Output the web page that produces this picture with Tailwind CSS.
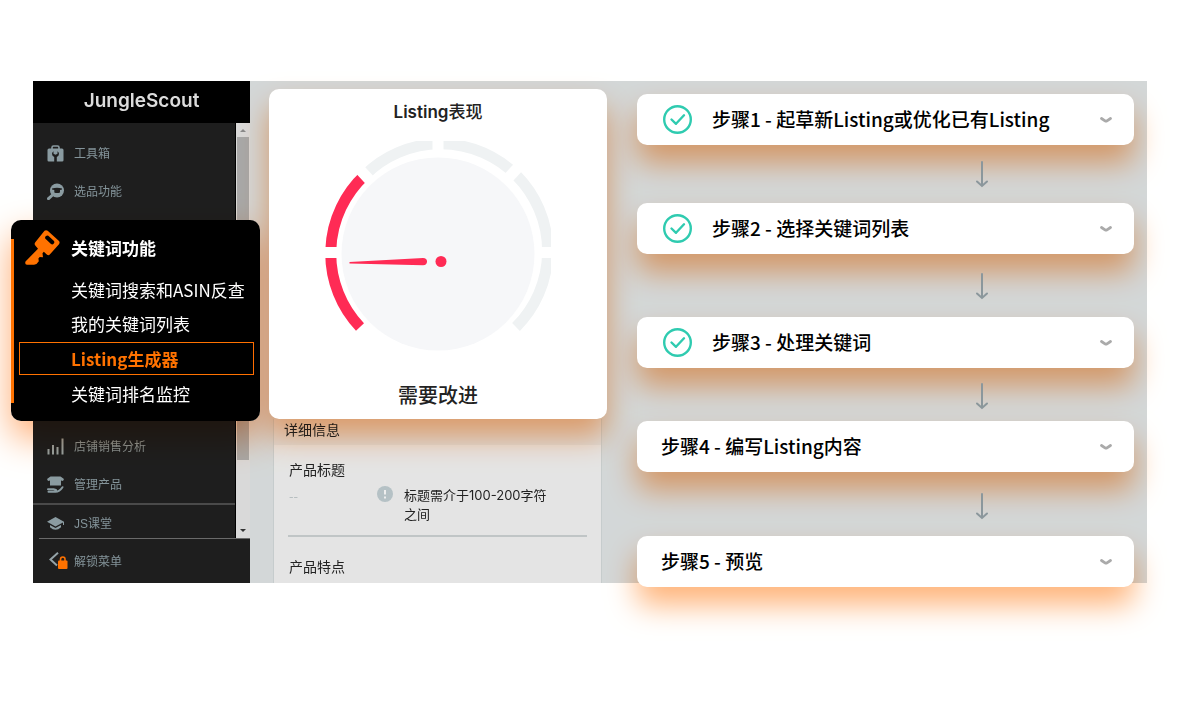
<!DOCTYPE html>
<html lang="zh-CN">
<head>
<meta charset="utf-8">
<meta name="viewport" content="width=device-width, initial-scale=1">
<title>JungleScout</title>
<script src="https://cdn.jsdelivr.net/npm/@tailwindcss/browser@4"></script>
</head>
<body class="min-h-screen bg-white px-[33px] pt-[81px] pb-12 font-['Noto_Sans_CJK_SC',sans-serif]">
<div class="flex bg-[#d3d7d8]">

  <!-- Sidebar -->
  <aside class="flex w-[217px] shrink-0 flex-col bg-[#1e1e1e] text-xs text-[#84949a]">
    <div class="flex h-[42px] items-center justify-center bg-black pb-[2px] font-['Inter','Noto_Sans_CJK_SC',sans-serif] text-[19px] font-semibold text-[#dcdcdc]">JungleScout</div>
    <nav class="flex" aria-label="主菜单">
      <ul class="flex-1 border-r border-black pt-[11px]">
        <li><a href="#" class="flex h-[38px] items-center gap-[10px] pl-[14px]">
          <svg class="size-[17px]" viewBox="0 0 17 17" aria-hidden="true"><path d="M5 4V2.500Q5 1 6.500 1h4Q12 1 12 2.500V4" fill="none" stroke="#8a9ba1" stroke-width="1.600"/><path fill="#8a9ba1" d="M2 3.500h13Q16.500 3.500 16.500 5v10.200q0 1.300-1.300 1.300H9.800V12Q12 11 12 8.800 12 7.300 10.500 6.300v2.500l-2 1-2-1V6.300Q5 7.300 5 8.800 5 11 7.200 12v4.500H1.800Q.5 16.500.5 15.200V5Q.5 3.500 2 3.500Z"/></svg>
          <span>工具箱</span></a></li>
        <li><a href="#" class="flex h-[38px] items-center gap-[10px] pl-[14px]">
          <svg class="size-[17px]" viewBox="0 0 17 17" aria-hidden="true"><circle cx="10" cy="7.500" r="7" fill="#8a9ba1"/><path d="M5.500 12 1.500 15.700" stroke="#8a9ba1" stroke-width="3" stroke-linecap="round"/><path fill="#1e1e1e" d="M5 5.500Q10 4 15 5.500V6.500L13 7v2.500Q10 10.500 7.300 9.500V7L5 6.500Z"/></svg>
          <span>选品功能</span></a></li>
        <li class="relative h-[217px]">
          <!-- Expanded keyword group -->
          <div class="absolute top-[10px] -left-[22px] w-[249px] rounded-[10px] bg-black py-[10px] text-[17px] leading-6 text-white before:pointer-events-none before:absolute before:inset-0 before:rounded-[10px] before:mix-blend-multiply before:shadow-[0_16px_36px_#ffab70]">
            <span class="absolute top-[19px] bottom-[18px] left-0 w-[3px] bg-[#ff7200]"></span>
            <a href="#" class="flex h-[35px] items-center gap-[11px] pl-[14px] font-bold">
              <svg class="size-[35px]" viewBox="0 0 35 35" aria-hidden="true"><path fill="#ff7200" fill-rule="evenodd" d="M19.500.8q1.500-1 3.200 0L34 11q1.200 1.600 0 3.200L24.800 24.500q-1.500 1.300-3 0l-3-2.800-1.300 1.600.5 4-3.300-.4-1.300 1.700.4 2.700-2.300 2.700-2.500.7H2Q-.5 34.500.5 31.500L13 18.700 10.300 15.500q-1.300-1.500 0-3.200ZM21 6q-1.700 1.600-.3 3l5.300 5q1.500 1 2.800-.5 1.200-1.500-.1-2.800L23.300 5.700Q22.200 5 21 6Z"/></svg>
              <span>关键词功能</span></a>
            <ul class="mt-2 mr-[6px] ml-2">
              <li><a href="#" class="flex h-[34px] items-center pl-[52px] whitespace-nowrap">关键词搜索和ASIN反查</a></li>
              <li><a href="#" class="flex h-[34px] items-center pl-[52px]">我的关键词列表</a></li>
              <li class="pt-px pb-[2px]"><a href="#" aria-current="page" class="flex h-[33px] items-center border border-[#ff7200] pl-[51px] font-bold text-[#ff7200]">Listing生成器</a></li>
              <li><a href="#" class="flex h-[34px] items-center pl-[52px]">关键词排名监控</a></li>
            </ul>
          </div>
        </li>
        <li><a href="#" class="flex h-[38px] items-center gap-[10px] pl-[14px]">
          <svg class="size-[17px]" viewBox="0 0 17 17" aria-hidden="true"><path d="M1.500 11v5.500M6 7v9.500M10.500 9v7.500M15.500.5v16" stroke="#94a3a8" stroke-width="2"/></svg>
          <span>店铺销售分析</span></a></li>
        <li><a href="#" class="flex h-[38px] items-center gap-[10px] pl-[14px]">
          <svg class="size-[17px]" viewBox="0 0 17 17" aria-hidden="true"><path fill="#8a9ba1" d="M3.500.5h10L17 3l-1 2-2-.5V9.500H3V4.500L1 5 0 3Z"/><path d="M1 13.200h5.500L9 14M1.500 15.700h7q4 0 7-4.500" fill="none" stroke="#8a9ba1" stroke-width="2" stroke-linecap="round" stroke-linejoin="round"/></svg>
          <span>管理产品</span></a></li>
        <li class="border-t-2 border-[#4a4a4a]"><a href="#" class="flex h-[33px] items-center gap-[10px] pt-1 pl-[14px]">
          <svg class="size-[17px]" viewBox="0 0 17 17" aria-hidden="true"><path fill="#8a9ba1" d="M8.500 2 17 6.800V10h-1V7.500L8.500 11.500 0 6.800ZM3 10l5.500 3L14 10v2.200Q8.500 17.500 3 12.200Z"/></svg>
          <span class="font-['Liberation_Sans','Noto_Sans_CJK_SC',sans-serif]">JS课堂</span></a></li>
      </ul>
      <div class="flex w-[14px] flex-col items-center bg-[#d9d9d9]" aria-hidden="true">
        <svg class="h-[14px] w-3 shrink-0" viewBox="0 0 12 14"><path d="M3 9 6 6l3 3Z" fill="#8a8a8a"/></svg>
        <div class="h-[323px] w-3 bg-[#a8a8a8]"></div>
        <svg class="mt-auto h-4 w-3" viewBox="0 0 12 16"><path d="m3 7 3 3 3-3Z" fill="#333"/></svg>
      </div>
    </nav>
    <div class="ml-[6px] border-t border-[#6a6a6a]">
      <button type="button" class="flex h-11 w-full items-center gap-[6px] pl-[10px]">
        <svg class="h-[18px] w-[19px]" viewBox="0 0 19 18" aria-hidden="true"><path d="M9 .8 1.500 7.500l6.500 6" fill="none" stroke="#94a3a8" stroke-width="2"/><path d="M11.500 10V7.500q0-2.500 2.300-2.500T16 7.500V10" fill="none" stroke="#ff7200" stroke-width="1.600"/><rect x="9" y="8.500" width="9.500" height="8.500" rx="1" fill="#ff7200"/></svg>
        <span>解锁菜单</span></button>
    </div>
  </aside>

  <!-- Listing score and details -->
  <div class="ml-[19px] flex w-[338px] shrink-0 flex-col pt-2 text-[#222]">
    <section class="relative flex h-[330px] flex-col items-center rounded-[10px] bg-white pt-[11px] before:pointer-events-none before:absolute before:inset-0 before:rounded-[10px] before:mix-blend-multiply before:shadow-[0_18px_30px_#ffb47a]">
      <h2 class="font-['Inter','Noto_Sans_CJK_SC',sans-serif] text-[17px] leading-6 font-semibold">Listing<span class="font-medium">表现</span></h2>
      <svg class="mt-[17px] size-[226px]" viewBox="-113 -113 226 226" role="img" aria-label="需要改进">
        <g fill="none" stroke-width="11">
          <path d="M-78 73A107 107 0 0 1-73-79" stroke="#ff2b55"/>
          <path d="M-73-79A107 107 0 0 1 78 73" stroke="#eff2f3"/>
          <path d="M-113-1.500H113M0-113V0M-83-89.800 0 0 83-89.800" stroke="#fff"/>
        </g>
        <circle r="96.500" fill="#f6f7f9"/>
        <path d="M-88.500 8-15 4q4 0 4 3.500T-15 11.200L-88.500 9.500Z" fill="#ff2b55"/>
        <circle cx="3" cy="7.500" r="5.500" fill="#ff2b55"/>
      </svg>
      <p class="mt-3 text-xl leading-8 font-medium">需要改进</p>
    </section>
    <section class="mr-[5px] ml-1 flex-1 border-x border-[#c6cccd] bg-[#e4e4e4] text-sm">
      <h3 class="flex h-[26px] items-center bg-[#dbdcdc] pb-[6px] pl-[10px]">详细信息</h3>
      <div class="mx-[14px] border-b-2 border-[#c0c5c6] pt-[14px] pb-[11px] pl-px">
        <h4 class="leading-5">产品标题</h4>
        <div class="mt-[7px] flex text-[13px] leading-[19px]">
          <span class="w-[88px] text-[#b4bcbe]">--</span>
          <svg class="mr-[11px] size-4 shrink-0" viewBox="0 0 16 16" aria-hidden="true"><circle cx="8" cy="8" r="8" fill="#b5c1c5"/><path d="M8 4v4.500M8 10.500v2" stroke="#eee" stroke-width="2"/></svg>
          <p class="w-[146px] font-['Inter','Noto_Sans_CJK_SC',sans-serif]">标题需介于100-200字符之间</p>
        </div>
      </div>
      <h4 class="mt-[19px] pl-[15px] leading-5">产品特点</h4>
    </section>
  </div>

  <!-- Steps -->
  <ol class="mr-[13px] -mb-1 ml-[30px] flex-1 pt-[13px] text-[19px] font-medium text-black">
    <li>
      <button type="button" class="relative flex h-[51px] w-full items-center rounded-[10px] bg-white pr-[22px] pl-[26px] before:pointer-events-none before:absolute before:inset-0 before:rounded-[10px] before:mix-blend-multiply before:shadow-[0_18px_30px_#ffb47a]">
        <svg class="mr-5 size-[29px] shrink-0" viewBox="0 0 29 29" fill="none" stroke="#2fcbb0" aria-hidden="true"><circle cx="14.500" cy="14.500" r="13.300" stroke-width="2.400"/><path d="m8.500 14.500 4.500 4.300 8-8.500" stroke-width="2.400" stroke-linecap="round" stroke-linejoin="round"/></svg>
        <span class="whitespace-nowrap">步骤1 - 起草新Listing或优化已有Listing</span>
        <svg class="ml-auto h-2 w-3 shrink-0" viewBox="0 0 12 8" aria-hidden="true"><path d="m1.500 2.500 3.500 2.300q1 .6 2 0l3.500-2.300" fill="none" stroke="#aaa" stroke-width="2.800" stroke-linecap="round"/></svg>
      </button>
    </li>
    <li class="flex h-[58px] items-center justify-end pr-[145px]" aria-hidden="true">
      <svg class="relative h-7 w-[14px]" viewBox="0 0 14 28" fill="none" stroke="#8b979c" stroke-width="2" stroke-linecap="round"><path d="M7 2v23M2 21.500 7 26l5-4.500"/></svg>
    </li>
    <li>
      <button type="button" class="relative flex h-[51px] w-full items-center rounded-[10px] bg-white pr-[22px] pl-[26px] before:pointer-events-none before:absolute before:inset-0 before:rounded-[10px] before:mix-blend-multiply before:shadow-[0_18px_30px_#ffb47a]">
        <svg class="mr-5 size-[29px] shrink-0" viewBox="0 0 29 29" fill="none" stroke="#2fcbb0" aria-hidden="true"><circle cx="14.500" cy="14.500" r="13.300" stroke-width="2.400"/><path d="m8.500 14.500 4.500 4.300 8-8.500" stroke-width="2.400" stroke-linecap="round" stroke-linejoin="round"/></svg>
        <span class="whitespace-nowrap">步骤2 - 选择关键词列表</span>
        <svg class="ml-auto h-2 w-3 shrink-0" viewBox="0 0 12 8" aria-hidden="true"><path d="m1.500 2.500 3.500 2.300q1 .6 2 0l3.500-2.300" fill="none" stroke="#aaa" stroke-width="2.800" stroke-linecap="round"/></svg>
      </button>
    </li>
    <li class="flex h-[63px] items-center justify-end pr-[145px]" aria-hidden="true">
      <svg class="relative h-7 w-[14px]" viewBox="0 0 14 28" fill="none" stroke="#8b979c" stroke-width="2" stroke-linecap="round"><path d="M7 2v23M2 21.500 7 26l5-4.500"/></svg>
    </li>
    <li>
      <button type="button" class="relative flex h-[51px] w-full items-center rounded-[10px] bg-white pr-[22px] pl-[26px] before:pointer-events-none before:absolute before:inset-0 before:rounded-[10px] before:mix-blend-multiply before:shadow-[0_18px_30px_#ffb47a]">
        <svg class="mr-5 size-[29px] shrink-0" viewBox="0 0 29 29" fill="none" stroke="#2fcbb0" aria-hidden="true"><circle cx="14.500" cy="14.500" r="13.300" stroke-width="2.400"/><path d="m8.500 14.500 4.500 4.300 8-8.500" stroke-width="2.400" stroke-linecap="round" stroke-linejoin="round"/></svg>
        <span class="whitespace-nowrap">步骤3 - 处理关键词</span>
        <svg class="ml-auto h-2 w-3 shrink-0" viewBox="0 0 12 8" aria-hidden="true"><path d="m1.500 2.500 3.500 2.300q1 .6 2 0l3.500-2.300" fill="none" stroke="#aaa" stroke-width="2.800" stroke-linecap="round"/></svg>
      </button>
    </li>
    <li class="flex h-[53px] items-center justify-end pt-[2px] pr-[145px]" aria-hidden="true">
      <svg class="relative h-7 w-[14px]" viewBox="0 0 14 28" fill="none" stroke="#8b979c" stroke-width="2" stroke-linecap="round"><path d="M7 2v23M2 21.500 7 26l5-4.500"/></svg>
    </li>
    <li>
      <button type="button" class="relative flex h-[51px] w-full items-center rounded-[10px] bg-white pr-[22px] pl-6 before:pointer-events-none before:absolute before:inset-0 before:rounded-[10px] before:mix-blend-multiply before:shadow-[0_18px_30px_#ffb47a]">
        <span class="whitespace-nowrap">步骤4 - 编写Listing内容</span>
        <svg class="ml-auto h-2 w-3 shrink-0" viewBox="0 0 12 8" aria-hidden="true"><path d="m1.500 2.500 3.500 2.300q1 .6 2 0l3.500-2.300" fill="none" stroke="#aaa" stroke-width="2.800" stroke-linecap="round"/></svg>
      </button>
    </li>
    <li class="flex h-[64px] items-center justify-end pt-1 pr-[145px]" aria-hidden="true">
      <svg class="relative h-7 w-[14px]" viewBox="0 0 14 28" fill="none" stroke="#8b979c" stroke-width="2" stroke-linecap="round"><path d="M7 2v23M2 21.500 7 26l5-4.500"/></svg>
    </li>
    <li>
      <button type="button" class="relative flex h-[51px] w-full items-center rounded-[10px] bg-white pr-[22px] pl-6 before:pointer-events-none before:absolute before:inset-0 before:rounded-[10px] before:mix-blend-multiply before:shadow-[0_18px_30px_#ffb47a]">
        <span class="whitespace-nowrap">步骤5 - 预览</span>
        <svg class="ml-auto h-2 w-3 shrink-0" viewBox="0 0 12 8" aria-hidden="true"><path d="m1.500 2.500 3.500 2.300q1 .6 2 0l3.500-2.300" fill="none" stroke="#aaa" stroke-width="2.800" stroke-linecap="round"/></svg>
      </button>
    </li>
  </ol>
</div>
</body>
</html>
